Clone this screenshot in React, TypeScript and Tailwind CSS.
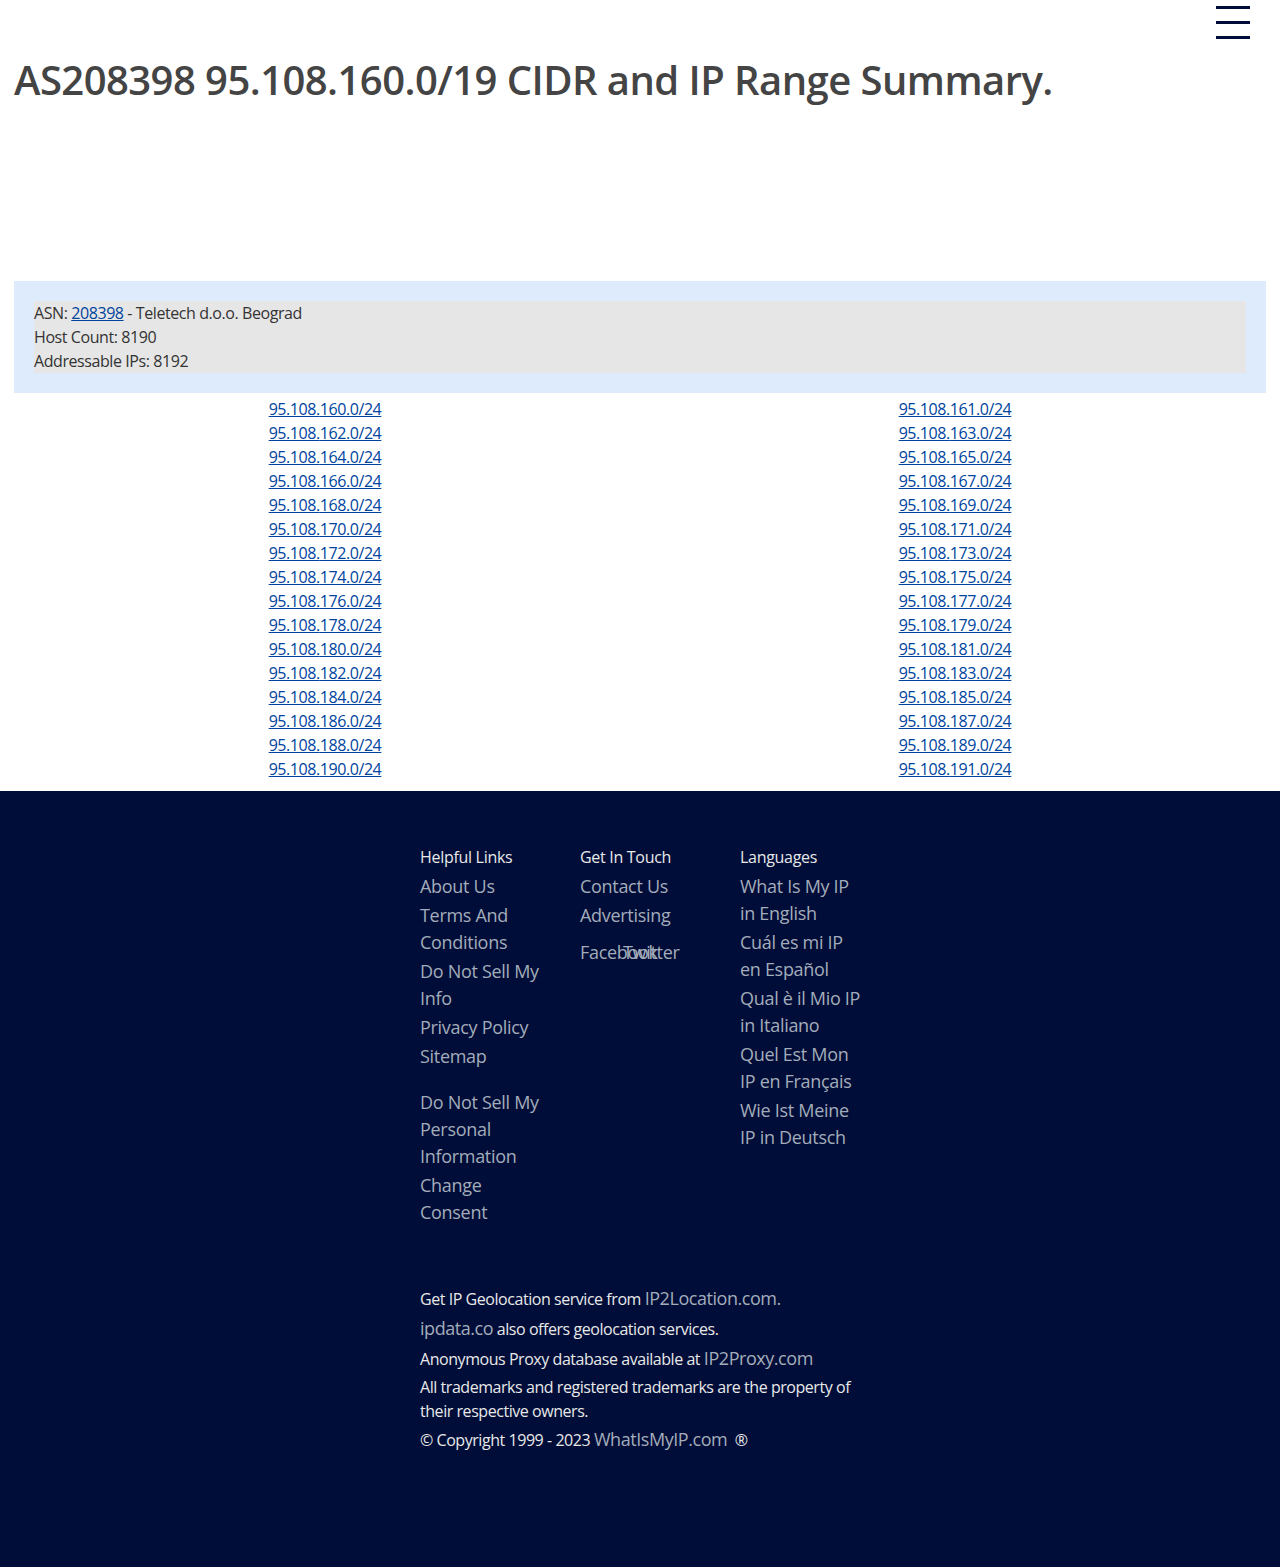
import React from "react";

const left = Array.from({ length: 16 }, (_, i) => 160 + i * 2);

function FLink({ children }: { children: React.ReactNode }) {
  return (
    <li className="mb-[2px] text-[18px] leading-[27px] text-[#a3acba]">
      <a href="#" className="text-[#a3acba] no-underline">
        {children}
      </a>
    </li>
  );
}

export default function App() {
  return (
    <div className="flex min-h-[1567px] flex-col bg-white font-['Open_Sans',sans-serif] text-[#333]">
      <div className="relative h-[44px]">
        <button className="absolute right-[30px] top-[6px] flex w-[34px] flex-col gap-[12px]">
          <span className="block h-[3px] w-[34px] bg-[#000d38]" />
          <span className="block h-[3px] w-[34px] bg-[#000d38]" />
          <span className="block h-[3px] w-[34px] bg-[#000d38]" />
        </button>
      </div>
      <div className="px-[14px]">
        <h1 className="m-0 text-[40px] font-semibold leading-[72px] text-[#444] tracking-[-0.55px]">
          AS208398 95.108.160.0/19 CIDR and IP Range Summary.
        </h1>
        <div className="h-[165px]" />
        <div className="bg-[#ddebfd] p-[20px]">
          <div className="bg-[#e6e6e6] text-[16px] leading-[24px] text-[#333] tracking-[-0.42px]">
            <div>
              ASN:{" "}
              <a href="#" className="text-[#00449e] underline">
                208398
              </a>{" "}
              - Teletech d.o.o. Beograd
            </div>
            <div>Host Count: 8190</div>
            <div>Addressable IPs: 8192</div>
          </div>
        </div>
        <div className="mx-[-4px] grid grid-cols-2 pt-[4px] pb-[10px] text-[16px] leading-[24px] tracking-[-0.43px]">
          {left.map((n) => (
            <React.Fragment key={n}>
              <div className="text-center">
                <a href="#" className="text-[#00449e] underline">
                  95.108.{n}.0/24
                </a>
              </div>
              <div className="text-center">
                <a href="#" className="text-[#00449e] underline">
                  95.108.{n + 1}.0/24
                </a>
              </div>
            </React.Fragment>
          ))}
        </div>
      </div>
      <footer className="flex-1 bg-[#000d38] pt-[54px] pb-[100px] tracking-[-0.3px]">
        <div className="mx-auto w-[440px]">
          <div className="grid grid-cols-[124px_124px_124px] gap-x-[36px]">
            <div>
              <div className="mb-[4px] text-[16px] leading-[24px] text-[#e8e8e8]">Helpful Links</div>
              <ul className="m-0 list-none p-0">
                <FLink>About Us</FLink>
                <FLink>Terms And Conditions</FLink>
                <FLink>Do Not Sell My Info</FLink>
                <FLink>Privacy Policy</FLink>
                <FLink>Sitemap</FLink>
              </ul>
              <ul className="m-0 mt-[19px] list-none p-0">
                <FLink>Do Not Sell My Personal Information</FLink>
                <FLink>Change Consent</FLink>
              </ul>
            </div>
            <div>
              <div className="mb-[4px] text-[16px] leading-[24px] text-[#e8e8e8]">Get In Touch</div>
              <ul className="m-0 list-none p-0">
                <FLink>Contact Us</FLink>
                <FLink>Advertising</FLink>
              </ul>
              <div className="relative mt-[10px] text-[18px] leading-[27px] text-[#a3acba]">
                <a href="#">Facebook</a>
                <a href="#" className="absolute left-[43px] top-0">
                  Twitter
                </a>
              </div>
            </div>
            <div>
              <div className="mb-[4px] text-[16px] leading-[24px] text-[#e8e8e8]">Languages</div>
              <ul className="m-0 list-none p-0">
                <FLink>What Is My IP in English</FLink>
                <FLink>Cuál es mi IP en Español</FLink>
                <FLink>Qual è il Mio IP in Italiano</FLink>
                <FLink>Quel Est Mon IP en Français</FLink>
                <FLink>Wie Ist Meine IP in Deutsch</FLink>
              </ul>
            </div>
          </div>
          <div className="mt-[57px] text-[16px] leading-[1.5] tracking-[-0.45px] text-[#e8e8e8]">
            <p className="mb-[3px]">
              Get IP Geolocation service from{" "}
              <a href="#" className="text-[18px] text-[#a3acba]">
                IP2Location.com.
              </a>
            </p>
            <p className="mb-[3px]">
              <a href="#" className="text-[18px] text-[#a3acba]">
                ipdata.co
              </a>{" "}
              also offers geolocation services.
            </p>
            <p className="mb-[3px]">
              Anonymous Proxy database available at{" "}
              <a href="#" className="text-[18px] text-[#a3acba]">
                IP2Proxy.com
              </a>
            </p>
            <p className="mb-[3px]">
              All trademarks and registered trademarks are the property of their respective owners.
            </p>
            <p className="mb-[3px]">
              © Copyright 1999 - 2023{" "}
              <a href="#" className="text-[18px] text-[#a3acba]">
                WhatIsMyIP.com
              </a>
              {"\u00a0 "}®
            </p>
          </div>
        </div>
      </footer>
    </div>
  );
}
